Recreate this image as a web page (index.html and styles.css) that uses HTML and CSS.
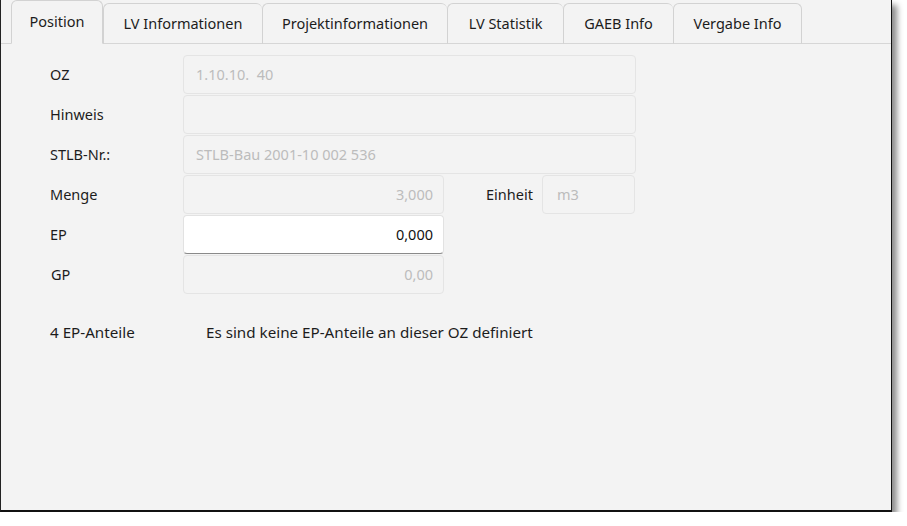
FILE: index.html
```html
<!DOCTYPE html>
<html lang="de">
<head>
    <meta charset="UTF-8">
    <title>Position</title>
    <link rel="stylesheet" href="styles.css">
</head>
<body>
    <div class="window">
        <!-- Tab bar -->
        <div class="tabs">
            <div class="tab active" style="width: 92px">Position</div>
            <div class="tab" style="width: 159px">LV Informationen</div>
            <div class="tab" style="width: 185px">Projektinformationen</div>
            <div class="tab" style="width: 116px">LV Statistik</div>
            <div class="tab" style="width: 110px">GAEB Info</div>
            <div class="tab" style="width: 129px">Vergabe Info</div>
        </div>

        <!-- Position form -->
        <div class="form">
            <div class="row">
                <label>OZ</label>
                <div class="field wide">1.10.10.&nbsp; 40</div>
            </div>
            <div class="row">
                <label>Hinweis</label>
                <div class="field wide"></div>
            </div>
            <div class="row">
                <label>STLB-Nr.:</label>
                <div class="field wide">STLB-Bau 2001-10 002 536</div>
            </div>
            <div class="row">
                <label>Menge</label>
                <div class="field short num">3,000</div>
                <label class="unit-label">Einheit</label>
                <div class="field unit">m3</div>
            </div>
            <div class="row">
                <label>EP</label>
                <div class="field short num edit">0,000</div>
            </div>
            <div class="row">
                <label class="gp">GP</label>
                <div class="field short num">0,00</div>
            </div>

            <div class="anteile">
                <label>4 EP-Anteile</label>
                <span>Es sind keine EP-Anteile an dieser OZ definiert</span>
            </div>
        </div>
    </div>
</body>
</html>
```

FILE: styles.css
```css
body {
    margin: 0;
    background: #fff;
    font-family: "Noto Sans", "Open Sans", sans-serif;
    font-size: 14px;
    color: #1c1c1c;
}

/* window frame */
.window {
    width: 892px;
    height: 512px;
    background: #f3f3f3;
    border-left: 1px solid #222;
    border-right: 1px solid #111;
    border-bottom: 2px solid #111;
    box-shadow: 5px 5px 6px rgba(0, 0, 0, 0.45);
    box-sizing: border-box;
}

/* tabs */
.tabs {
    display: flex;
    align-items: flex-end;
    height: 44px;
    padding-left: 10px;
    border-bottom: 1px solid #d6d6d6;
    box-sizing: border-box;
}

.tab {
    height: 41px;
    margin-bottom: -1px;
    padding-bottom: 2px;
    box-sizing: border-box;
    border: 1px solid #d2d2d2;
    border-right: none;
    border-bottom: 1px solid #d6d6d6;
    border-radius: 6px 6px 0 0;
    background: #f3f3f3;
    display: flex;
    align-items: center;
    justify-content: center;
    font-size: 14.5px;
}

.tab:last-child {
    border-right: 1px solid #d2d2d2;
}

.tab.active {
    height: 44px;
    border-right: 1px solid #d2d2d2;
    border-bottom-color: #f3f3f3;
    padding-bottom: 3px;
}

/* form rows */
.form {
    padding: 10px 0 0 49px;
}

.row {
    display: flex;
    align-items: center;
    height: 40px;
}

.row label {
    width: 133px;
    font-size: 14.5px;
}

.row label.gp {
    padding-left: 1px;
    width: 132px;
}

.field {
    height: 39px;
    box-sizing: border-box;
    border: 1px solid #e4e4e4;
    border-radius: 4px;
    background: #f3f3f3;
    color: #bcbcbc;
    font-size: 14.5px;
    display: flex;
    align-items: center;
    padding: 0 12px;
}

.field.wide {
    width: 453px;
}

.field.short {
    width: 261px;
}

.field.num {
    justify-content: flex-end;
    padding-right: 10px;
}

.field.edit {
    background: #fff;
    color: #111;
    border-color: #e2e2e2;
    border-bottom-color: #8a8a8a;
}

.row label.unit-label {
    width: auto;
    margin-left: 42px;
    margin-right: 9px;
}

.field.unit {
    width: 93px;
    padding-left: 14px;
}

/* EP-Anteile */
.anteile {
    display: flex;
    align-items: center;
    margin-top: 28px;
    font-size: 15.2px;
}

.anteile label {
    width: 156px;
}
```
